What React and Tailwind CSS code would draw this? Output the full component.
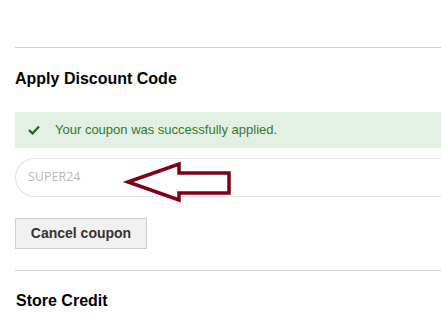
import React from "react";

const Arrow = () => (
  <svg width="110" height="42" viewBox="0 0 110 42" className="absolute left-[107px] top-[4px]">
    <polygon
      points="6,20 57,2 57,11 107,11 107,31 57,31 57,38"
      fill="none"
      stroke="#7d0019"
      strokeWidth="3.5"
      strokeLinejoin="miter"
    />
  </svg>
);

export default function App() {
  return (
    <div className="w-[441px] h-[327px] overflow-hidden bg-white pl-[15px] font-['Liberation_Sans',Arial,sans-serif]">
      <div className="h-[48px] border-b border-[#cfcfcf]" />
      <h2 className="mt-[21px] text-[16px] leading-[20px] font-bold text-black">Apply Discount Code</h2>
      <div className="mt-[23px] h-[36px] bg-[#e4efe4] flex items-center pl-[13px]">
        <svg width="12" height="10" viewBox="0 0 12 10" className="mr-[15px]">
          <path d="M1 5 L4.5 8.5 L11 1.5" fill="none" stroke="#1f5e1f" strokeWidth="2.2" />
        </svg>
        <span className="text-[13px] text-[#2f7a2f]">Your coupon was successfully applied.</span>
      </div>
      <div className="relative mt-[10px]">
        <div className="h-[39px] rounded-l-[20px] border border-r-0 border-[#e2e2e2] flex items-center pl-[12px]">
          <span className="text-[12.5px] text-[#b8b8b8] font-['Open_Sans',sans-serif]">SUPER24</span>
        </div>
        <Arrow />
      </div>
      <button className="mt-[21px] w-[132px] h-[31px] bg-[#f0f0f0] border border-[#cccccc] text-[14px] font-bold text-[#333]">
        Cancel coupon
      </button>
      <div className="mt-[21px] border-b border-[#cfcfcf]" />
      <h2 className="mt-[20px] ml-[1px] text-[16px] leading-[20px] font-bold text-black">Store Credit</h2>
    </div>
  );
}
